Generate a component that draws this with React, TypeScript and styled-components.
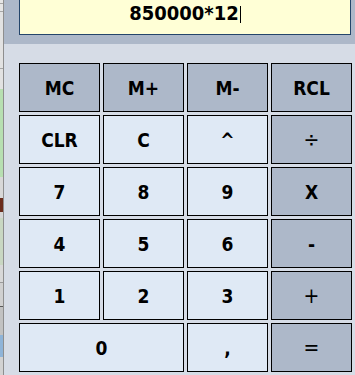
import React from 'react'
import styled, { createGlobalStyle } from 'styled-components'

type Tone = 'memory' | 'digit' | 'op'

type KeyDef = {
    label: string
    tone: Tone
    wide?: boolean
    thin?: boolean
}

const GlobalStyle = createGlobalStyle`
    html, body {
        margin: 0;
        padding: 0;
    }
    body {
        width: 355px;
        height: 375px;
        overflow: hidden;
        background: #d6dce6;
    }
`

const Screen = styled.div`
    display: flex;
    width: 355px;
    height: 375px;
`

// the window behind the calculator peeks out on the left
const BackWindow = styled.div`
    width: 3px;
    flex-shrink: 0;
    background: linear-gradient(
        to bottom,
        #e6e6e6 0px, #e6e6e6 3px,
        #a6a6a6 3px, #a6a6a6 4px,
        #e6e6e6 4px, #e6e6e6 11px,
        #a6a6a6 11px, #a6a6a6 12px,
        #e2e2e2 12px, #e2e2e2 68px,
        #a6a6a6 68px, #a6a6a6 69px,
        #e2e2e2 69px, #e2e2e2 89px,
        #b7dfb1 89px, #b7dfb1 177px,
        #d8d8d8 177px, #d8d8d8 198px,
        #6b2c1c 198px, #6b2c1c 212px,
        #d6d6d6 212px, #d6d6d6 218px,
        #c9d7c2 218px, #c9d7c2 265px,
        #d8d8d8 265px, #d8d8d8 282px,
        #9a9a9a 282px, #9a9a9a 283px,
        #d0d0d0 283px, #d0d0d0 306px,
        #5a5a5a 306px, #5a5a5a 307px,
        #c2c2c2 307px, #c2c2c2 335px,
        #8fb4d8 335px, #8fb4d8 357px,
        #d2d2d2 357px, #d2d2d2 375px
    );
`

const Calculator = styled.div`
    flex: 1;
    display: flex;
    flex-direction: column;
    background: #d6dce6;
    border-left: 1px solid #8e8e8e;
`

const DisplayBar = styled.div`
    height: 44px;
    background: #adb8c9;
    padding: 0 4px 0 15px;
`

const Display = styled.div`
    box-sizing: border-box;
    height: 35px;
    padding-top: 2px;
    background: #ffffd6;
    border: 1px solid #24456a;
    border-top: none;
    text-align: center;
    font-family: 'DejaVu Sans Condensed', 'DejaVu Sans', sans-serif;
    font-stretch: condensed;
    font-weight: bold;
    font-size: 20px;
    line-height: 23px;
    color: #000;
`

const Caret = styled.span`
    display: inline-block;
    width: 1px;
    height: 17px;
    margin-left: 1px;
    vertical-align: -3px;
    background: #000;
`

const Keypad = styled.div`
    display: grid;
    grid-template-columns: repeat(4, 81px);
    grid-auto-rows: 49px;
    gap: 3px;
    padding: 19px 0 0 15px;
`

const Key = styled.button<{ $tone: Tone; $wide?: boolean; $thin?: boolean }>`
    appearance: none;
    box-sizing: border-box;
    margin: 0;
    padding: 0;
    display: flex;
    align-items: center;
    justify-content: center;
    grid-column: ${(p) => (p.$wide ? 'span 2' : 'span 1')};
    border: 1px solid #000;
    border-radius: 0;
    background: ${(p) => (p.$tone === 'digit' ? '#dfe9f5' : '#adb8c9')};
    color: #000;
    font-family: 'DejaVu Sans Condensed', 'DejaVu Sans', sans-serif;
    font-stretch: condensed;
    font-weight: ${(p) => (p.$thin ? 'normal' : 'bold')};
    font-size: ${(p) => (p.$thin ? '21px' : '19px')};
`

const keys: KeyDef[] = [
    { label: 'MC', tone: 'memory' },
    { label: 'M+', tone: 'memory' },
    { label: 'M-', tone: 'memory' },
    { label: 'RCL', tone: 'memory' },
    { label: 'CLR', tone: 'digit' },
    { label: 'C', tone: 'digit' },
    { label: '^', tone: 'digit' },
    { label: '÷', tone: 'op', thin: true },
    { label: '7', tone: 'digit' },
    { label: '8', tone: 'digit' },
    { label: '9', tone: 'digit' },
    { label: 'X', tone: 'op' },
    { label: '4', tone: 'digit' },
    { label: '5', tone: 'digit' },
    { label: '6', tone: 'digit' },
    { label: '-', tone: 'op' },
    { label: '1', tone: 'digit' },
    { label: '2', tone: 'digit' },
    { label: '3', tone: 'digit' },
    { label: '+', tone: 'op', thin: true },
    { label: '0', tone: 'digit', wide: true },
    { label: ',', tone: 'digit' },
    { label: '=', tone: 'op', thin: true },
]

const App = () => {
    return (
        <>
            <GlobalStyle />
            <Screen>
                <BackWindow />
                <Calculator>
                    <DisplayBar>
                        <Display>
                            850000*12
                            <Caret />
                        </Display>
                    </DisplayBar>
                    <Keypad>
                        {keys.map((k) => (
                            <Key
                                key={k.label}
                                type='button'
                                $tone={k.tone}
                                $wide={k.wide}
                                $thin={k.thin}
                            >
                                {k.label}
                            </Key>
                        ))}
                    </Keypad>
                </Calculator>
            </Screen>
        </>
    )
}

export default App
